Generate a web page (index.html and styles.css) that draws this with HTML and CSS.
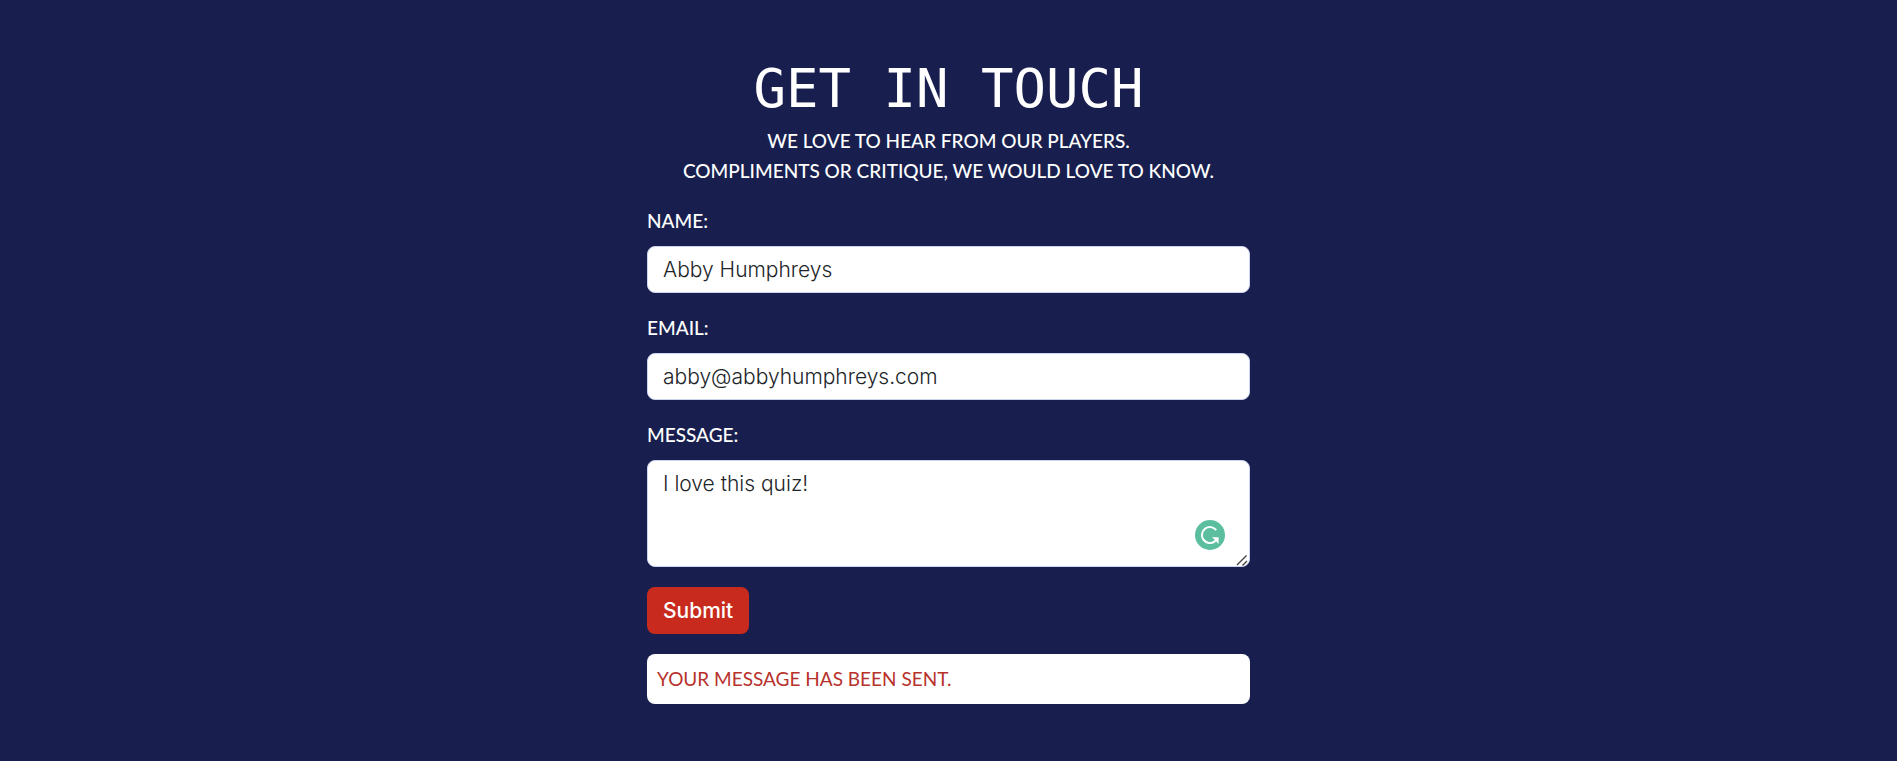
FILE: index.html
```html
<!DOCTYPE html>
<html lang="en">
<head>
<meta charset="utf-8">
<title>Get in touch</title>
<meta name="viewport" content="width=device-width, initial-scale=1">
<link rel="stylesheet" href="styles.css">
</head>
<body>
<main class="contact">
  <header class="intro">
    <h1 class="title">GET IN TOUCH</h1>
    <p class="lead">WE LOVE TO HEAR FROM OUR PLAYERS.<br>COMPLIMENTS OR CRITIQUE, WE WOULD LOVE TO KNOW.</p>
  </header>
  <form class="form">
    <div class="field">
      <label class="label" for="name">NAME:</label>
      <input class="control" id="name" type="text" value="Abby Humphreys">
    </div>
    <div class="field">
      <label class="label" for="email">EMAIL:</label>
      <input class="control" id="email" type="email" value="abby@abbyhumphreys.com">
    </div>
    <div class="field">
      <label class="label" for="message">MESSAGE:</label>
      <textarea class="control" id="message" rows="3" spellcheck="false">I love this quiz!</textarea>
      <svg class="assistant" viewBox="0 0 30 30" aria-hidden="true">
        <circle cx="15" cy="15" r="15" fill="#5bbf9f"/>
        <path d="M21.3 10.2A8 8 0 1 0 19.5 21.6L21.8 19" fill="none" stroke="#fff" stroke-width="2"/>
        <path d="M16.8 17.2H23.6V24L21.5 21.8L19.3 19.3Z" fill="#fff"/>
      </svg>
      <svg class="grip" viewBox="0 0 12 12" aria-hidden="true">
        <path d="M1 11L10.500 1.500M6.500 11.500L11 7" fill="none" stroke="#444" stroke-width="1.400"/>
      </svg>
    </div>
    <button class="submit" type="submit">Submit</button>
    <p class="notice" role="status">YOUR MESSAGE HAS BEEN SENT.</p>
  </form>
</main>
</body>
</html>
```
FILE: styles.css
```css
* {
  box-sizing: border-box;
}

body {
  margin: 0;
  min-height: 100vh;
  background: #181f4e;
  color: #fff;
  font: 400 21px/30px Inter, "Open Sans", sans-serif;
}

.contact {
  width: 100%;
  max-width: 635px;
  margin: 0 auto;
  padding: 56px 16px 50px;
}

.intro {
  margin-bottom: 20px;
  text-align: center;
}

.title {
  margin: 0 0 4px;
  font: 400 54px/66px "DejaVu Sans Mono", monospace;
}

.lead {
  margin: 0;
  font-family: Lato, sans-serif;
  font-size: 19px;
  font-weight: 500;
}

.form {
  display: flex;
  flex-direction: column;
  align-items: flex-start;
  gap: 20px;
}

.field {
  position: relative;
  width: 100%;
}

.label {
  display: block;
  margin-bottom: 10px;
  font-family: Lato, sans-serif;
  font-size: 19px;
  font-weight: 500;
}

.control {
  display: block;
  width: 100%;
  margin: 0;
  padding: 8px 15px 7px;
  border: 1px solid #ced4f0;
  border-radius: 8px;
  background: #fff;
  color: #212529;
  font: inherit;
  font-weight: 300;
}

.control::-webkit-resizer {
  background: transparent;
}

.assistant {
  position: absolute;
  right: 25px;
  bottom: 17px;
  width: 30px;
  height: 30px;
}

.grip {
  position: absolute;
  right: 2px;
  bottom: 1px;
  width: 12px;
  height: 12px;
  pointer-events: none;
}

.submit {
  padding: 9px 16px 8px;
  border: 0;
  border-radius: 8px;
  background: #c92a1e;
  color: #fff;
  font: inherit;
  font-weight: 500;
}

.notice {
  width: 100%;
  margin: 0;
  padding: 10px;
  border-radius: 8px;
  background: #fff;
  color: #b8322c;
  font-family: Lato, sans-serif;
  font-size: 19px;
}
```
